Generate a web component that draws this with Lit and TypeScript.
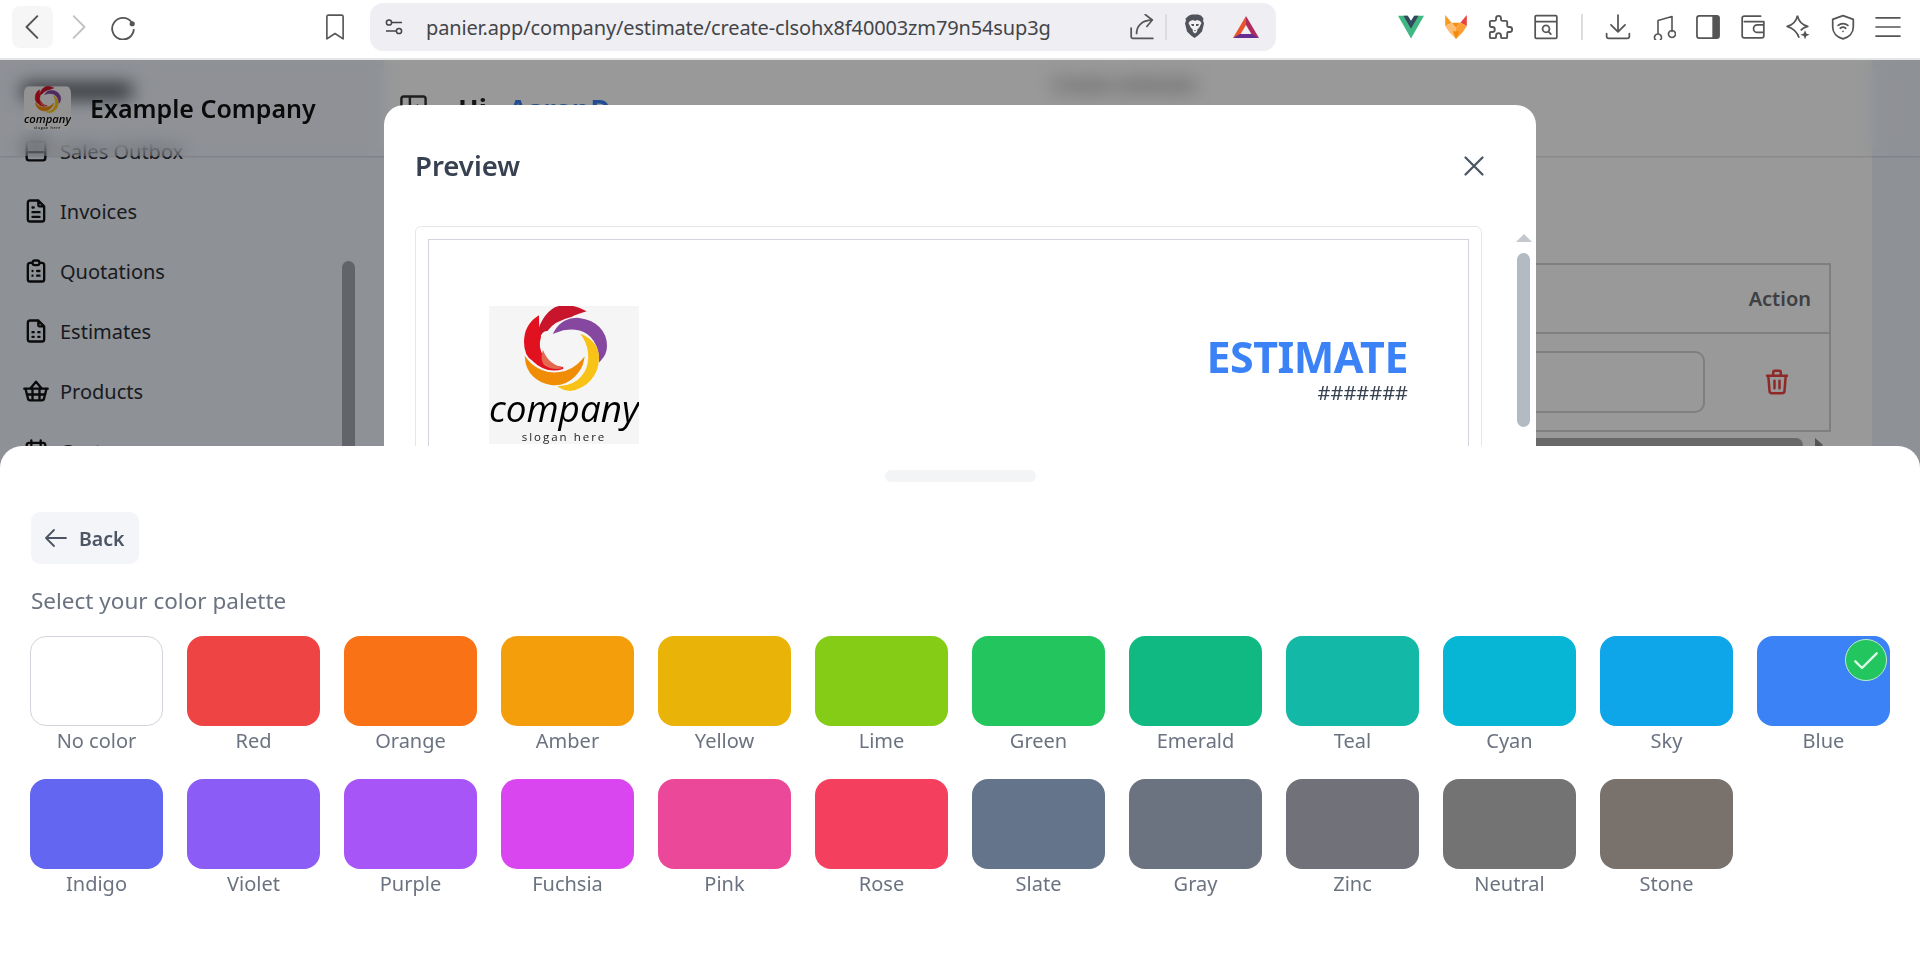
import {css, html, svg, LitElement} from 'lit';
import {customElement} from 'lit/decorators.js';

const PALETTE: [string, string][] = [
  ['No color', '#ffffff'], ['Red', '#ef4444'], ['Orange', '#f97316'], ['Amber', '#f59e0b'],
  ['Yellow', '#eab308'], ['Lime', '#84cc16'], ['Green', '#22c55e'], ['Emerald', '#10b981'],
  ['Teal', '#14b8a6'], ['Cyan', '#06b6d4'], ['Sky', '#0ea5e9'], ['Blue', '#3b82f6'],
  ['Indigo', '#6366f1'], ['Violet', '#8b5cf6'], ['Purple', '#a855f7'], ['Fuchsia', '#d946ef'],
  ['Pink', '#ec4899'], ['Rose', '#f43f5e'], ['Slate', '#64748b'], ['Gray', '#6b7280'],
  ['Zinc', '#71717a'], ['Neutral', '#737373'], ['Stone', '#78716c'],
];

const FILE = 'M17 21h-10a2 2 0 0 1 -2 -2v-14a2 2 0 0 1 2 -2h7l5 5v11a2 2 0 0 1 -2 2z M14 3v4a1 1 0 0 0 1 1h4';

const NAV: [string, string][] = [
  ['Sales Outbox', 'M4 6a2 2 0 0 1 2-2h12a2 2 0 0 1 2 2v12a2 2 0 0 1-2 2H6a2 2 0 0 1-2-2z M4 13h16'],
  ['Invoices', FILE + ' M9 9h1 M9 13h6 M9 17h6'],
  ['Quotations', 'M9 5h-2a2 2 0 0 0 -2 2v12a2 2 0 0 0 2 2h10a2 2 0 0 0 2 -2v-12a2 2 0 0 0 -2 -2h-2 M11 3h2a2 2 0 0 1 0 4h-2a2 2 0 0 1 0 -4z M9 12h.01 M13 12h2 M9 16h.01 M13 16h2'],
  ['Estimates', FILE + ' M9 13h1 M14 13h1 M9 17h1 M14 17h1'],
  ['Products', 'M7 10l5 -6l5 6 M21 10l-2 8a2 2.5 0 0 1 -2 2h-10a2 2.5 0 0 1 -2 -2l-2 -8z M2 10h20 M9 10v10 M15 10v10 M4 15h16'],
  ['Customers', 'M4 7a2 2 0 0 1 2-2h12a2 2 0 0 1 2 2v12a2 2 0 0 1-2 2H6a2 2 0 0 1-2-2z M16 3v4 M8 3v4 M4 11h16'],
];

// company logo with the swirl, viewBox is the size of the big copy in the preview
const logo = (cls: string) => html`<svg class=${cls} viewBox="0 0 150 138">
  <rect width="150" height="138" fill="#f5f5f5"></rect>
  <path fill="#c8152b" stroke="#c8152b" stroke-width="2" d="M95 5C88 1 78-1 70 1 58 4 49 20 49 34 51 27 54 24 58 24 62 18 70 13 82 10 86 8 91 6 95 5z"></path>
  <path fill="#e2111f" stroke="#e2111f" stroke-width="2" d="M49 11C40 17 36 26 36 36c0 9 3 15 8 18 8 8 17 12 30 8-9-1-15-4-20-11-5-7-5-14-3-20-2-7-2-14-2-20z"></path>
  <path fill="#e36a50" d="M54 44c3 8 9 15 20 18-7 2-13 1-19-3-3-5-3-10-1-15z"></path>
  <path fill="#85479f" stroke="#85479f" stroke-width="2" d="M66 26c5-9 14-14 24-13 17 2 27 13 27 27 0 5-2 10-6 14 0-10-3-18-9-24-8-8-22-10-36-4z"></path>
  <path fill="#f08c05" stroke="#f08c05" stroke-width="2" d="M37 53c8 11 22 16 34 14 9-1 17-6 23-13-1 6-4 11-9 16-8 8-15 9-23 8-14-2-24-12-25-25z"></path>
  <path fill="#f9c216" stroke="#f9c216" stroke-width="2" d="M94 30c10 5 15 13 15 22 0 17-12 30-28 32-4 0-7-1-10-3 10-1 18-5 22-10 9-10 10-27 1-41z"></path>
  <text x="75" y="116" text-anchor="middle" font-size="36" font-style="italic" fill="#000" font-family="Open Sans, sans-serif" textLength="150" lengthAdjust="spacingAndGlyphs">company</text>
  <text x="75" y="135" text-anchor="middle" font-size="11.5" letter-spacing="2" fill="#222" font-family="Open Sans, sans-serif">slogan here</text>
</svg>`;

const stroke = (d: string, w = 1.7, box = '0 0 24 24') => html`<svg class="tico" viewBox=${box} fill="none" stroke="#555" stroke-width=${w} stroke-linecap="round" stroke-linejoin="round"><path d=${d}></path></svg>`;

const BRAVE = svg`<path fill="#50535b" d="M6 1.5L9 .5h6l3 1 2.500 3-.5 2 1 3-2 8-4 4-3.500 2.500-3.500-2.500-4-4-2-8 1-3-.5-2z"></path>
  <path fill="#f0f0f3" d="M7 7l3-1 2 1 2-1 3 1 1.500 2-2.500 5-1.500 1-.5 3-2 1.500-2-1.500-.5-3-1.500-1-2.500-5z"></path>
  <path fill="#50535b" d="M8 10h3v2H9z M13 12v-2h3l-1 2z M11 16h2l-1 1.500z"></path>`;

const BAT = svg`<polygon fill="#e8552b" points="13,1 0,23 7,20 13,10"></polygon>
  <polygon fill="#b02a5e" points="13,1 26,23 19,20 13,10"></polygon>
  <polygon fill="#662d91" points="0,23 26,23 19,19 7,19"></polygon>`;

const FOX = svg`<polygon fill="#f79a1d" points="2,1 8,8 2,11"></polygon>
  <polygon fill="#e8433e" points="22,1 16,8 22,11"></polygon>
  <polygon fill="#f59018" points="8,8 16,8 12,13"></polygon>
  <polygon fill="#fcbd73" points="2,11 8,8 12,13 12,23 6,17"></polygon>
  <polygon fill="#fb9f34" points="22,11 16,8 12,13 12,23 18,17"></polygon>
  <polygon fill="#f58a0a" points="9,16 15,16 12,23"></polygon>`;

@customElement('app-root')
export class AppRoot extends LitElement {
  static override styles = css`
    :host {
      display: block;
      width: 1920px;
      height: 956px;
      overflow: hidden;
      font-family: 'Noto Sans', 'Open Sans', sans-serif;
      background: #fff;
    }
    * { box-sizing: border-box; }
    svg { display: block; flex: none; }

    .toolbar {
      display: flex;
      align-items: center;
      height: 60px;
      padding: 0 10px 4px 12px;
      background: #fff;
      border-bottom: 2px solid #e4e5e6;
    }
    .tbox {
      width: 45px;
      height: 42px;
      flex: none;
      display: flex;
      align-items: center;
      justify-content: center;
    }
    .left { width: 41px; margin-right: 4px; }
    .active { background: #f6f6f7; border-radius: 8px; }
    .bookmark { margin-left: 165px; margin-right: 13px; }
    .tico { width: 26px; height: 26px; }
    .lion { width: 24px; height: 27px; }
    .url {
      width: 906px;
      height: 48px;
      background: #eeeef3;
      border-radius: 13px;
      display: flex;
      align-items: center;
      padding: 0 6px 0 15px;
      flex: none;
    }
    .url .tune { width: 18px; height: 16px; margin-right: 23px; }
    .url-text {
      flex: 1;
      font-size: 20px;
      color: #444548;
      white-space: nowrap;
      letter-spacing: -0.14px;
    }
    .url .share { width: 46px; }
    .url .shield { width: 48px; margin-left: 4px; }
    .url .bat { width: 48px; margin-left: 3px; }
    .vsep { width: 2px; height: 26px; background: #dcdcdf; flex: none; }
    .right-tools { display: flex; align-items: center; margin-left: auto; }
    .sep-gap { width: 27px; display: flex; justify-content: center; }

    .view {
      position: relative;
      height: 896px;
      display: flex;
      background: #edf2fb;
      overflow: hidden;
    }
    .sidebar {
      width: 384px;
      flex: none;
      padding-top: 1px;
      color: #2a2e35;
      font-size: 20px;
    }
    .nav-row {
      display: flex;
      align-items: center;
      gap: 10px;
      height: 60px;
      padding-left: 22px;
    }
    .nav-row svg { width: 28px; height: 28px; }
    /* row scrolled away under the header, only its smudge shows through the blur */
    .nav-ghost { width: 110px; height: 14px; background: #2a2e35; }
    .side-thumb {
      position: absolute;
      left: 342px;
      top: 201px;
      width: 13px;
      height: 300px;
      border-radius: 7px;
      background: #a4a7af;
    }
    .main {
      width: 1488px;
      flex: none;
      background: #fff;
      padding: 12px 41px 0 36px;
    }
    .crumb {
      font-size: 18px;
      font-weight: 700;
      color: #777;
      text-align: right;
      padding-right: 635px;
    }
    .table {
      margin-top: 167px;
      border: 2px solid #d4d4d4;
    }
    .thead {
      height: 69px;
      border-bottom: 2px solid #d4d4d4;
      display: flex;
      align-items: center;
      justify-content: flex-end;
      padding-right: 18px;
      font-size: 20px;
      font-weight: 600;
      color: #676a6f;
    }
    .trow {
      height: 96px;
      display: flex;
      align-items: center;
      justify-content: flex-end;
      padding-right: 37px;
      gap: 57px;
    }
    .field {
      width: 600px;
      height: 62px;
      border: 2px solid #d4d4d4;
      border-radius: 10px;
    }
    .trow svg { width: 30px; height: 30px; }
    .hscroll {
      display: flex;
      align-items: center;
      gap: 12px;
      margin-top: 6px;
      padding-right: 8px;
    }
    .hthumb { flex: 1; height: 14px; background: #b0b0b0; border-radius: 7px; }
    .harrow {
      width: 0;
      height: 0;
      border-left: 8px solid #8a8a8a;
      border-top: 7px solid transparent;
      border-bottom: 7px solid transparent;
    }

    .header {
      position: absolute;
      left: 0;
      top: 0;
      width: 100%;
      height: 96px;
      display: flex;
      align-items: center;
      background: rgba(255, 255, 255, 0.06);
      backdrop-filter: blur(9px);
      box-shadow: 0 1px 2px rgba(0, 0, 0, 0.14);
    }
    .brand {
      width: 399px;
      padding-left: 24px;
      display: flex;
      align-items: center;
      gap: 19px;
      font-size: 25px;
      font-weight: 600;
      color: #111;
    }
    .brand-logo { width: 47px; height: 46px; border-radius: 8px; }
    .greet { display: flex; align-items: center; gap: 30px; font-size: 27px; font-weight: 700; color: #222; }
    .greet svg { width: 29px; height: 29px; }
    .blue { color: #3b82f6; margin-left: 22px; word-spacing: -6px; }

    .scrim {
      position: absolute;
      inset: 0;
      background: rgba(0, 0, 0, 0.4);
    }

    .modal {
      position: absolute;
      left: 384px;
      top: 45px;
      width: 1152px;
      height: 500px;
      background: #fff;
      border-radius: 20px 20px 0 0;
      padding: 0 54px 0 31px;
      overflow: hidden;
    }
    .modal-head {
      display: flex;
      align-items: center;
      justify-content: space-between;
      height: 121px;
      font-size: 27.5px;
      font-weight: 600;
      color: #374151;
    }
    .modal-head svg { width: 34px; height: 34px; margin-right: -9px; }
    .sheetbox {
      width: 1067px;
      border: 1.5px solid #e5e7eb;
      border-radius: 6px;
      padding: 12px 12px 0;
    }
    .paper {
      border: 1.5px solid #d1d5db;
      height: 300px;
      padding: 66px 60px 0 60px;
      display: flex;
      justify-content: space-between;
    }
    .paper-logo { width: 150px; height: 138px; }
    .title { text-align: right; padding-top: 26px; }
    .title h1 {
      margin: 0;
      font-size: 43px;
      line-height: 50px;
      font-weight: 700;
      letter-spacing: -0.5px;
      color: #3b82f6;
    }
    .title p {
      margin: 0;
      font-size: 20px;
      line-height: 22px;
      color: #374151;
    }
    .sb-up {
      position: absolute;
      left: 1132px;
      top: 129px;
      width: 0;
      height: 0;
      border-left: 8px solid transparent;
      border-right: 8px solid transparent;
      border-bottom: 8px solid #c4c8cc;
    }
    .sb-thumb {
      position: absolute;
      left: 1133px;
      top: 148px;
      width: 13px;
      height: 174px;
      border-radius: 7px;
      background: #b4bac2;
    }

    .palette-sheet {
      position: absolute;
      left: 0;
      right: 0;
      top: 386px;
      bottom: 0;
      background: #fff;
      border-radius: 22px 22px 0 0;
      padding: 24px 30px 0;
    }
    .handle { width: 151px; height: 12px; margin: 0 auto; background: #f3f4f6; border-radius: 6px; }
    .back {
      display: inline-flex;
      align-items: center;
      gap: 11px;
      width: 108px;
      height: 52px;
      margin: 30px 0 0 1px;
      padding-left: 13px;
      background: #f3f5f9;
      border-radius: 9px;
      font-size: 19.5px;
      font-weight: 600;
      color: #4b5563;
    }
    .back svg { width: 24px; height: 24px; }
    .hint {
      margin: 22px 0 20px 1px;
      font-size: 22.5px;
      line-height: 30px;
      color: #6b7280;
    }
    .grid {
      display: grid;
      grid-template-columns: repeat(12, 133px);
      column-gap: 24px;
      row-gap: 24px;
    }
    .color { text-align: center; font-size: 20px; line-height: 28px; color: #6b7280; }
    .swatch {
      position: relative;
      height: 90px;
      border-radius: 16px;
      margin-bottom: 1px;
    }
    .swatch.none { border: 1px solid #d1d5db; }
    .tick {
      position: absolute;
      right: 3px;
      top: 3px;
      width: 42px;
      height: 42px;
      border-radius: 50%;
      background: #22c55e;
      border: 1.5px solid #bdeccd;
      display: flex;
      align-items: center;
      justify-content: center;
    }
    .tick svg { width: 32px; height: 32px; }
  `;

  override render() {
    return html`
      <div class="toolbar">
        <div class="tbox left active">${stroke('M16 2 6 12l10 10', 1.8)}</div>
        <div class="tbox left"><svg class="tico" viewBox="0 0 24 24" fill="none" stroke="#c2c2c2" stroke-width="1.8" stroke-linecap="round" stroke-linejoin="round"><path d="M8 2l10 10L8 22"></path></svg></div>
        <div class="tbox left">
          <svg class="tico" viewBox="0 0 24 24" fill="none" stroke="#555" stroke-width="1.7"><path d="M20 7.500A10 10 0 1 0 22 14"></path><circle cx="20.500" cy="9" r="2.400" fill="#555" stroke="none"></circle></svg>
        </div>
        <div class="tbox bookmark">${stroke('M6 1h12a1.500 1.500 0 0 1 1.500 1.500V23L12 18l-7.500 5V2.500A1.500 1.500 0 0 1 6 1z', 1.5)}</div>
        <div class="url">
          <svg class="tune" viewBox="0 0 18 16" fill="none" stroke="#444" stroke-width="1.5"><circle cx="4" cy="3.500" r="2.600"></circle><path d="M7 3.500h10M1 12h10"></path><circle cx="14" cy="12" r="2.600"></circle></svg>
          <div class="url-text">panier.app/company/estimate/create-clsohx8f40003zm79n54sup3g</div>
          <div class="tbox share">${stroke('M2 13v8a1.500 1.500 0 0 0 1.500 1.500H22 M7 18c0-7 5-12 14-12.500 M15 .5l6.500 5-5 6', 1.6)}</div>
          <div class="vsep"></div>
          <div class="tbox shield"><svg class="lion" viewBox="0 0 24 27">${BRAVE}</svg></div>
          <div class="tbox bat"><svg class="tico" viewBox="0 0 26 24">${BAT}</svg></div>
        </div>
        <div class="right-tools">
          <div class="tbox"><svg class="tico" viewBox="0 0 24 23"><polygon fill="#41b883" points="0,1 9,1 12,6 15,1 24,1 12,22"></polygon><polygon fill="#35495e" points="5,1 9,1 12,6 15,1 19,1 12,13"></polygon></svg></div>
          <div class="tbox"><svg class="tico" viewBox="0 0 24 24">${FOX}</svg></div>
          <div class="tbox">${stroke('M4 7h3a1 1 0 0 0 1 -1v-1a2 2 0 0 1 4 0v1a1 1 0 0 0 1 1h3a1 1 0 0 1 1 1v3a1 1 0 0 0 1 1h1a2 2 0 0 1 0 4h-1a1 1 0 0 0 -1 1v3a1 1 0 0 1 -1 1h-3a1 1 0 0 1 -1 -1v-1a2 2 0 0 0 -4 0v1a1 1 0 0 1 -1 1h-3a1 1 0 0 1 -1 -1v-3a1 1 0 0 1 1 -1h1a2 2 0 0 0 0 -4h-1a1 1 0 0 1 -1 -1v-3a1 1 0 0 1 1 -1', 1.5, '1.500 1.500 21 21')}</div>
          <div class="tbox">${stroke('M3 1.500h18a1 1 0 0 1 1 1v19a1 1 0 0 1-1 1H3a1 1 0 0 1-1-1v-19a1 1 0 0 1 1-1z M2 7h20 M12 10.500a3.200 3.200 0 1 0 .01 0z M14.500 16.500l2 2', 1.6)}</div>
          <div class="sep-gap"><div class="vsep"></div></div>
          <div class="tbox">${stroke('M12 1v15 M5.500 10l6.500 6.500 6.500-6.500 M1.500 18v2.500a2 2 0 0 0 2 2h17a2 2 0 0 0 2-2V18', 1.6)}</div>
          <div class="tbox">${stroke('M8 20V6.500L22 2.500v15 M8 20a3.500 3.500 0 1 1-.01 0z M22 16.500a3.500 3.500 0 1 1-.01 0z', 1.6, '0 0 26 26')}</div>
          <div class="tbox"><svg class="tico" viewBox="0 0 24 24"><rect x="1.800" y="1.800" width="20.400" height="20.400" rx="2.200" fill="none" stroke="#555" stroke-width="1.600"></rect><path d="M16 1.800h4a2.200 2.200 0 0 1 2.200 2.200v16a2.200 2.200 0 0 1-2.200 2.200h-4z" fill="#555"></path></svg></div>
          <div class="tbox">${stroke('M19 2H4a2 2 0 0 0-2 2v16a2 2 0 0 0 2 2h16a2 2 0 0 0 2-2V7H4 M22 10h-6a2.500 2.500 0 0 0 0 7h6', 1.6)}</div>
          <div class="tbox"><svg class="tico" viewBox="0 0 24 24"><path fill="none" stroke="#555" stroke-width="1.600" stroke-linejoin="round" d="M11.500 1.500c1 5 4 8.500 9.500 10-3 .8-5 1.900-6.500 3.600M13 22c-1.500-5-5-8.700-11-10.500 5.500-1.500 8.500-5 9.500-10"></path><path fill="#555" d="M18.500 15l1.200 3 3 1.200-3 1.200-1.200 3-1.200-3-3-1.200 3-1.200z"></path></svg></div>
          <div class="tbox">${stroke('M12 1.500l9.500 3.500v7c0 5.500-4 9.500-9.500 11-5.500-1.500-9.500-5.500-9.500-11V5z M7.500 10.500c2.500-2.200 6.500-2.200 9 0 M9.500 13.200c1.500-1.200 3.500-1.200 5 0 M12 16v.01', 1.6)}</div>
          <div class="tbox">${stroke('M1 3.500h22 M1 12h22 M1 20.500h22', 1.6)}</div>
        </div>
      </div>

      <div class="view">
        <div class="sidebar">
          <div class="nav-row"><span class="nav-ghost"></span></div>
          ${NAV.map(([label, d]) => html`<div class="nav-row">
            <svg viewBox="0 0 24 24" fill="none" stroke="#111" stroke-width="2" stroke-linecap="round" stroke-linejoin="round"><path d=${d}></path></svg>
            <span>${label}</span>
          </div>`)}
        </div>
        <div class="side-thumb"></div>
        <div class="main">
          <div class="crumb">Create estimate</div>
          <div class="table">
            <div class="thead">Action</div>
            <div class="trow">
              <div class="field"></div>
              <svg viewBox="0 0 24 24" fill="none" stroke="#ef4444" stroke-width="2" stroke-linecap="round" stroke-linejoin="round"><path d="M4 7h16 M10 11v6 M14 11v6 M5 7l1 12a2 2 0 0 0 2 2h8a2 2 0 0 0 2-2l1-12 M9 7V4a1 1 0 0 1 1-1h4a1 1 0 0 1 1 1v3"></path></svg>
            </div>
          </div>
          <div class="hscroll"><div class="hthumb"></div><div class="harrow"></div></div>
        </div>
        <div class="header">
          <div class="brand">${logo('brand-logo')}<span>Example Company</span></div>
          <div class="greet">
            <svg viewBox="0 0 24 24" fill="none" stroke="#333" stroke-width="2"><rect x="2" y="2" width="20" height="20" rx="2"></rect><path d="M9 2v20 M16 9l-3 3 3 3"></path></svg>
            <span>Hi<span class="blue">Aaron D</span></span>
          </div>
        </div>
        <div class="scrim"></div>

        <div class="modal">
          <div class="modal-head">
            <span>Preview</span>
            <svg viewBox="0 0 24 24" fill="none" stroke="#4b5563" stroke-width="1.600" stroke-linecap="round"><path d="M6 6l12 12M18 6L6 18"></path></svg>
          </div>
          <div class="sheetbox">
            <div class="paper">
              ${logo('paper-logo')}
              <div class="title"><h1>ESTIMATE</h1><p>#######</p></div>
            </div>
          </div>
          <div class="sb-up"></div>
          <div class="sb-thumb"></div>
        </div>

        <div class="palette-sheet">
          <div class="handle"></div>
          <div class="back">
            <svg viewBox="0 0 24 24" fill="none" stroke="#4b5563" stroke-width="1.800" stroke-linecap="round" stroke-linejoin="round"><path d="M22 12H2M10 4l-8 8 8 8"></path></svg>
            Back
          </div>
          <div class="hint">Select your color palette</div>
          <div class="grid">
            ${PALETTE.map(([name, color]) => html`<div class="color">
              <div class="swatch ${name === 'No color' ? 'none' : ''}" style="background:${color}">
                ${name === 'Blue'
                  ? html`<div class="tick"><svg viewBox="0 0 24 24" fill="none" stroke="#dcfce7" stroke-width="1.800" stroke-linecap="round" stroke-linejoin="round"><path d="M4 13l5 5L20 7"></path></svg></div>`
                  : ''}
              </div>
              ${name}
            </div>`)}
          </div>
        </div>
      </div>
    `;
  }
}

declare global {
  interface HTMLElementTagNameMap {
    'app-root': AppRoot;
  }
}
